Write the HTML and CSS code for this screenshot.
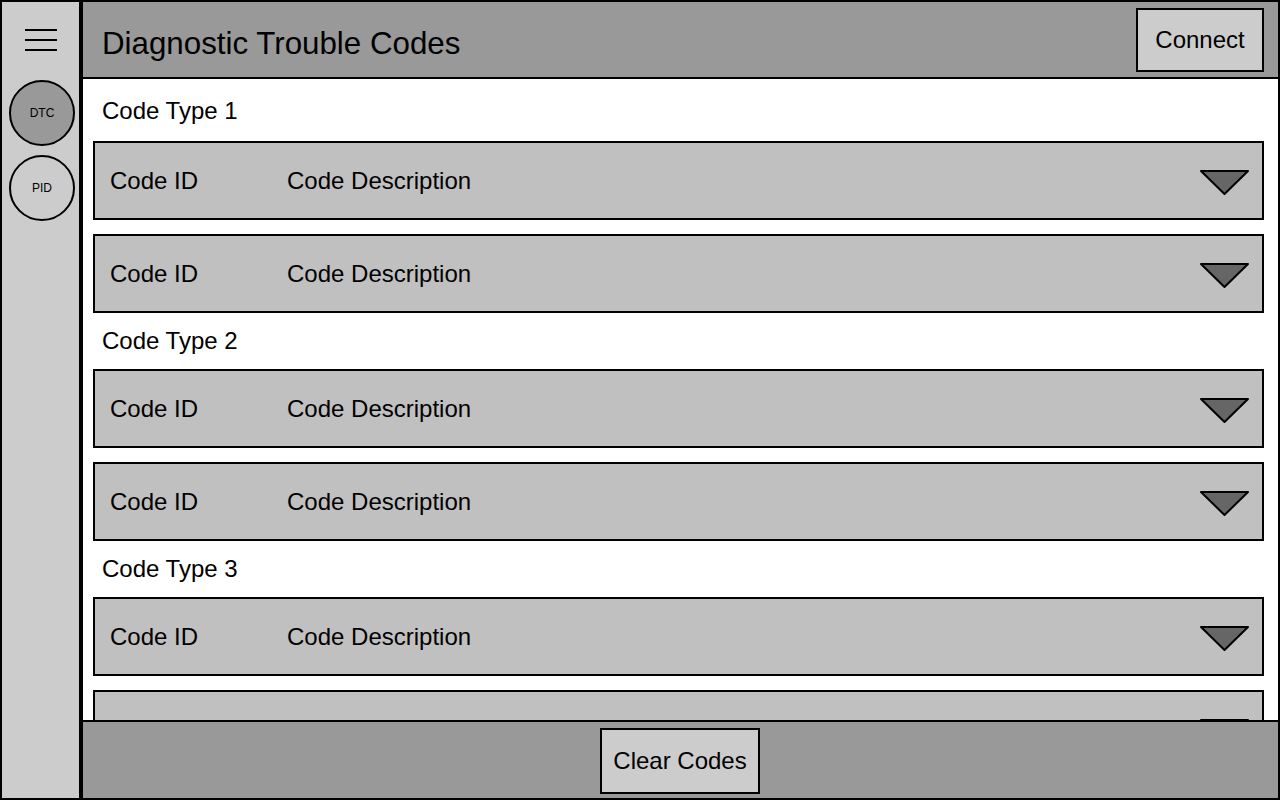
FILE: index.html
```html
<!DOCTYPE html>
<html>
<head>
<meta charset="utf-8">
<link rel="stylesheet" href="styles.css">
</head>
<body>
<div class="app">
  <nav class="sidebar">
    <div class="hamburger"><span></span><span></span><span></span></div>
    <div class="nav-circle active">DTC</div>
    <div class="nav-circle">PID</div>
  </nav>
  <div class="main">
    <header class="topbar">
      <h1 class="title">Diagnostic Trouble Codes</h1>
      <button class="btn connect">Connect</button>
    </header>
    <section class="content">
      <div class="group first">
        <div class="group-label">Code Type 1</div>
        <div class="code-row"><span class="code-id">Code ID</span><span class="code-desc">Code Description</span><svg class="caret" width="49" height="26" viewBox="0 0 49 26"><polygon points="1,1 48,1 24.5,24" /></svg></div>
        <div class="code-row"><span class="code-id">Code ID</span><span class="code-desc">Code Description</span><svg class="caret" width="49" height="26" viewBox="0 0 49 26"><polygon points="1,1 48,1 24.5,24" /></svg></div>
      </div>
      <div class="group">
        <div class="group-label">Code Type 2</div>
        <div class="code-row"><span class="code-id">Code ID</span><span class="code-desc">Code Description</span><svg class="caret" width="49" height="26" viewBox="0 0 49 26"><polygon points="1,1 48,1 24.5,24" /></svg></div>
        <div class="code-row"><span class="code-id">Code ID</span><span class="code-desc">Code Description</span><svg class="caret" width="49" height="26" viewBox="0 0 49 26"><polygon points="1,1 48,1 24.5,24" /></svg></div>
      </div>
      <div class="group">
        <div class="group-label">Code Type 3</div>
        <div class="code-row"><span class="code-id">Code ID</span><span class="code-desc">Code Description</span><svg class="caret" width="49" height="26" viewBox="0 0 49 26"><polygon points="1,1 48,1 24.5,24" /></svg></div>
        <div class="code-row"><span class="code-id">Code ID</span><span class="code-desc">Code Description</span><svg class="caret" width="49" height="26" viewBox="0 0 49 26"><polygon points="1,1 48,1 24.5,24" /></svg></div>
      </div>
    </section>
    <footer class="bottombar">
      <button class="btn clear">Clear Codes</button>
    </footer>
  </div>
</div>
</body>
</html>
```

FILE: styles.css
```css
* { box-sizing: border-box; }
html, body { margin: 0; padding: 0; }
body {
  font-family: "Liberation Sans", Arial, sans-serif;
  color: #000;
  background: #fff;
}
.app {
  display: flex;
  width: 1280px;
  height: 800px;
  overflow: hidden;
}
.sidebar {
  width: 81px;
  flex: none;
  height: 800px;
  background: #cccccc;
  border: 2px solid #000;
  display: flex;
  flex-direction: column;
  align-items: center;
  padding-left: 3px;
}
.hamburger {
  margin-top: 27px;
  width: 32px;
  height: 22px;
  display: flex;
  flex-direction: column;
  justify-content: space-between;
  margin-right: 2px;
}
.hamburger span {
  display: block;
  height: 2px;
  background: #000;
}
.nav-circle {
  width: 66px;
  height: 66px;
  border-radius: 50%;
  border: 2px solid #000;
  background: #cccccc;
  display: flex;
  align-items: center;
  justify-content: center;
  font-size: 12px;
  margin-top: 9px;
}
.nav-circle.active {
  background: #999999;
  margin-top: 29px;
}
.main {
  flex: 1;
  display: flex;
  flex-direction: column;
  height: 800px;
  border-left: 2px solid #000;
  border-right: 2px solid #000;
  min-width: 0;
}
.topbar {
  flex: none;
  height: 79px;
  background: #999999;
  border-top: 2px solid #000;
  border-bottom: 2px solid #000;
  display: flex;
  align-items: center;
  justify-content: space-between;
  padding: 0 14px 0 19px;
}
.title {
  margin: 8px 0 0 0;
  font-size: 31.3px;
  font-weight: normal;
}
.btn {
  font-family: "Liberation Sans", Arial, sans-serif;
  font-size: 24px;
  color: #000;
  background: #cccccc;
  border: 2px solid #000;
  border-radius: 0;
  padding: 0;
}
.connect {
  width: 128px;
  height: 64px;
  margin-top: 1px;
}
.content {
  flex: 1;
  overflow: hidden;
  background: #fff;
  padding: 0 14px 0 10px;
  min-height: 0;
}
.group {
  display: flex;
  flex-direction: column;
  gap: 14px;
}
.group-label {
  height: 56px;
  line-height: 56px;
  font-size: 24px;
  padding-left: 9px;
  margin-bottom: -14px;
}
.group.first .group-label {
  height: 62px;
  line-height: 64px;
}
.code-row {
  height: 79px;
  background: #c0c0c0;
  border: 2px solid #000;
  display: flex;
  align-items: center;
  padding: 0 13px 0 15px;
  font-size: 24px;
}
.code-id {
  width: 177px;
  flex: none;
}
.code-desc {
  flex: 1;
}
.caret {
  flex: none;
  margin-top: 4px;
}
.caret polygon {
  fill: #666666;
  stroke: #000;
  stroke-width: 2;
  stroke-linejoin: round;
}
.bottombar {
  flex: none;
  height: 80px;
  background: #999999;
  border-top: 2px solid #000;
  border-bottom: 2px solid #000;
  display: flex;
  align-items: center;
  justify-content: center;
}
.clear {
  width: 160px;
  height: 66px;
  margin-top: 2px;
  margin-left: -1px;
}
```
